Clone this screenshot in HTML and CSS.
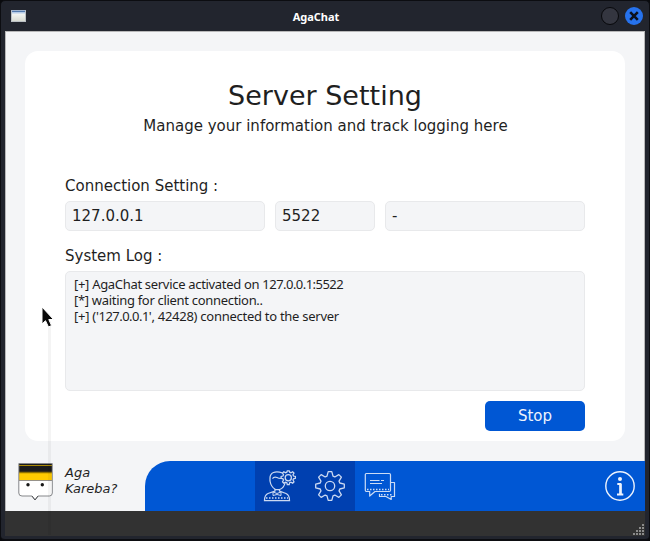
FILE: index.html
```html
<!DOCTYPE html>
<html lang="en">
<head>
<meta charset="utf-8">
<title>AgaChat</title>
<link rel="stylesheet" href="styles.css">
</head>
<body>
<div class="window">
  <header class="titlebar">
    <span class="app-icon"></span>
    <h1 class="title">AgaChat</h1>
    <div class="controls">
      <span class="control"></span>
      <span class="control close"><svg width="18" height="18" viewBox="0 0 18 18"><path d="M5.200 5.200l7.600 7.600M12.800 5.200l-7.600 7.600" stroke="#0c111d" stroke-width="2.600"/></svg></span>
    </div>
  </header>
  <div class="client">
    <main class="card">
      <h2 class="heading">Server Setting</h2>
      <p class="subtitle">Manage your information and track logging here</p>
      <div class="label connection-label">Connection Setting :</div>
      <div class="fields">
        <div class="field">127.0.0.1</div>
        <div class="field port">5522</div>
        <div class="field">-</div>
      </div>
      <div class="label log-label">System Log :</div>
      <div class="log">
        <div class="line">[+] AgaChat service activated on <span class="digits">127.0.0.1:5522</span></div>
        <div class="line">[*] waiting for client connection..</div>
        <div class="line last">[+] ('<span class="digits">127.0.0.1</span>', 42428) connected to the server</div>
      </div>
      <button class="stop">Stop</button>
    </main>
    <footer class="footer">
      <div class="brand">
        <svg class="logo" width="36" height="40" viewBox="0 0 36 40">
          <path d="M1 1h33v29q0 3-3 3H20l-3 4-3-4H4q-3 0-3-3z" fill="#fff"/>
          <path d="M1 1h33v9H1z" fill="#1b1b1b"/>
          <path d="M1 10h33v7H1z" fill="#ffcb00"/>
          <path d="M1 2.500h33" stroke="#a98805"/>
          <path d="M1 9.500h33" stroke="#8f7200" stroke-width="1.500"/>
          <path d="M1 17.500h33" stroke="#97928a"/>
          <path d="M.8.500h33.500v29.500q0 3-3 3H20l-3 4-3-4H4q-3.200 0-3.200-3z" fill="none" stroke="#85878a"/>
          <path d="M14 33l3 4 3-4" fill="none" stroke="#55575a"/>
          <circle cx="10" cy="21.700" r="1.700" fill="#171717"/><circle cx="24.300" cy="21.700" r="1.700" fill="#171717"/>
        </svg>
        <div class="brand-name">Aga<br>Kareba?</div>
      </div>
      <nav class="nav">
        <div class="tab active">
          <svg width="50" height="50" viewBox="0 0 50 50" fill="none" stroke="#cbd9f2" stroke-width="1.250">
            <path d="M27.500 12C20 9 15 12 15 17v3q1 6 5.500 8.500h4Q29 27 30 22"/>
            <path d="M17.500 17.500q1.500-2 4.500-1 3 1.500 5 .5"/>
            <path d="M20 28v2l-7 2.500q-3.500 1.500-3.500 7H34.500q0-5.500-3.500-7L24.500 30v-2"/>
            <path d="M18 31l4 1.500 4-1.500v3.500L22 33.500l-4 1z" stroke-width="1"/>
            <path d="M11 37h22" stroke-dasharray="1.500 1.500" stroke-width="1.700"/>
            <path d="M31.800 11.200l.5-1.400h1.900l.5 1.400 1.200.5 1.800-1 1.300 1.300-1 1.800.5 1.200 1.900.5v1.800l-1.900.5-.5 1.200 1 1.800-1.300 1.300-1.800-1-1.200.5-.5 1.900h-1.900l-.5-1.900-1.200-.5-1.800 1-1.300-1.300 1-1.800-.5-1.200-1.900-.5v-1.800l1.900-.5.5-1.200-1-1.800 1.300-1.300 1.800 1z"/>
            <circle cx="33.300" cy="16.700" r="3.100"/>
          </svg>
        </div>
        <div class="tab active">
          <svg width="50" height="50" viewBox="-25 -25 50 50" fill="none" stroke="#cbd9f2" stroke-width="1.300" stroke-linejoin="round">
            <path d="M-3-9.800L-1.800-14.300H1.800L3-9.800L4.800-9.050L8.840-11.400L11.400-8.840L9.050-4.800L9.800-3L14.300-1.800V1.800L9.800 3L9.050 4.800L11.400 8.840L8.840 11.400L4.800 9.050L3 9.800L1.800 14.300H-1.800L-3 9.800L-4.800 9.050L-8.840 11.400L-11.400 8.840L-9.050 4.800L-9.800 3L-14.300 1.800V-1.800L-9.800-3L-9.050-4.800L-11.400-8.840L-8.840-11.400L-4.800-9.050Z"/>
            <circle r="4.700"/>
          </svg>
        </div>
        <div class="tab">
          <svg width="50" height="50" viewBox="0 1 50 50" fill="none" stroke="#cbdcf5" stroke-width="1.200" stroke-linejoin="round">
            <path d="M11.300 13.500h23q1.200 0 1.200 1.200v15.600q0 1.200-1.200 1.200H20l-5.300 4.500v-4.500h-3.400q-1-.2-1-1.200V14.500q0-1 1-1z"/>
            <path d="M36 22.500h3.500v14h-3.300v3L31 36.500H24.500v-2.800M15 20.500h9.500M26 20.500h3M15 23.500h12"/>
            <path d="M12 29.500h22M26 34.700h12" stroke-dasharray="1.500 1.500" stroke-width="1.500"/>
          </svg>
        </div>
        <div class="tab info">
          <svg width="50" height="50" viewBox="0 0 50 50" fill="none" stroke="#edf3fd" stroke-width="1.400">
            <circle cx="25" cy="25" r="14.200"/>
            <circle cx="25" cy="18" r="2" fill="#edf3fd" stroke="none"/>
            <path d="M22.300 23H25.500v10.500M22 33.500h6.300" stroke-width="1.800"/>
            <path d="M25.500 23v10.500" stroke-width="2.500"/>
          </svg>
        </div>
      </nav>
    </footer>
  </div>
  <div class="statusbar">
    <svg width="12" height="12" viewBox="0 0 12 12" fill="#8b8b8b"><path d="M9 0h2v2H9zM6 3h2v2H6zM9 3h2v2H9zM3 6h2v2H3zM6 6h2v2H6zM9 6h2v2H9zM0 9h2v2H0zM3 9h2v2H3zM6 9h2v2H6zM9 9h2v2H9z"/></svg>
  </div>
  <div class="drag-shadow"></div>
  <svg class="pointer" width="14" height="23" viewBox="0 0 14 23"><path d="M1 1v17l3.500-3.300L7.500 21l3-1.500L7.800 13.500H12.500z" fill="#080808" stroke="#fff" stroke-width="1"/></svg>
</div>
</body>
</html>
```

FILE: styles.css
```css
* { box-sizing: border-box; }
body { margin: 0; background: #090a0d; font-family: "DejaVu Sans", sans-serif; color: #1f1f1f; }
.window {
  position: relative;
  width: 650px;
  height: 541px;
  padding: 0 4px 3px;
  background: #22252e;
  border: solid #0c0d11;
  border-width: 1px 1px 2px;
  border-radius: 5px;
}
.titlebar { height: 30px; display: grid; grid-template-columns: 61px 1fr 79px; align-items: center; }
.app-icon { width: 15px; height: 12px; margin-left: 6px; border: 1px solid #bbc0c4; border-top-color: #a0b3cd; background: linear-gradient(#557bad 0 1px, #b7cce6 1px 2px, #f3f4f1 3px, #d8dbd2); }
.title { margin: 0; text-align: center; color: #fff; font: bold 11px "Noto Sans", sans-serif; }
.controls { display: flex; gap: 6px; justify-content: flex-end; padding-right: 2px; }
.control { width: 18px; height: 18px; border-radius: 50%; background: #343640; border: 1px solid #07080b; }
.close { background: #2672ed; border: 0; }
.close svg { display: block; }
.client { height: 480px; padding: 19px 0 0 19px; background: #f4f5f7; border: 1px solid #b8b8b9; border-bottom: 0; }
.card { width: 600px; height: 390px; padding: 0 40px; background: #fff; border-radius: 13px; display: flex; flex-direction: column; }
.heading { margin: 27px 0 0; height: 36px; line-height: 36px; font-size: 27px; font-weight: 400; text-align: center; }
.subtitle { margin: 2px 0 0; padding-left: 1px; height: 20px; line-height: 20px; font-size: 15px; text-align: center; white-space: nowrap; }
.label { height: 20px; line-height: 20px; font-size: 15px; }
.connection-label { margin-top: 40px; }
.fields { margin-top: 5px; display: grid; grid-template-columns: 200px 100px 200px; gap: 10px; }
.field { height: 30px; padding-left: 6px; line-height: 28px; font-size: 15px; background: #f4f5f7; border: 1px solid #e8e9eb; border-radius: 5px; }
.log-label { margin-top: 15px; }
.log { margin-top: 5px; height: 120px; padding: 4px 8px; font: 13px/16px "Noto Sans", sans-serif; letter-spacing: -.31px; white-space: nowrap; background: #f4f5f7; border: 1px solid #e8e9eb; border-radius: 5px; }
.line { height: 16px; }
.last { letter-spacing: -.27px; }
.digits { letter-spacing: -.54px; }
.stop { margin: 10px 0 0; align-self: flex-end; width: 100px; height: 30px; padding: 0; border: 0; border-radius: 5px; background: #0057d4; color: #edf3fd; font: 15px "DejaVu Sans", sans-serif; }
.footer { margin: 20px -1px 0 -20px; height: 50px; display: flex; }
.brand { width: 140px; padding-left: 13px; display: flex; }
.logo { margin-top: 2px; }
.brand-name { margin: 4px 0 0 11px; font-size: 13px; line-height: 16px; font-style: italic; }
.nav { flex: 1; padding-left: 110px; display: flex; background: #0057d4; border-top-left-radius: 25px; }
.tab { width: 50px; height: 50px; }
.tab svg { display: block; }
.active { background: #0040b0; }
.info { margin-left: auto; }
.statusbar { height: 25px; background: #323232; display: flex; justify-content: flex-end; align-items: flex-end; }
.drag-shadow { position: absolute; left: 47px; top: 320px; width: 3px; height: 214px; background: rgba(0, 0, 0, .045); }
.pointer { position: absolute; left: 40px; top: 305px; }
```
